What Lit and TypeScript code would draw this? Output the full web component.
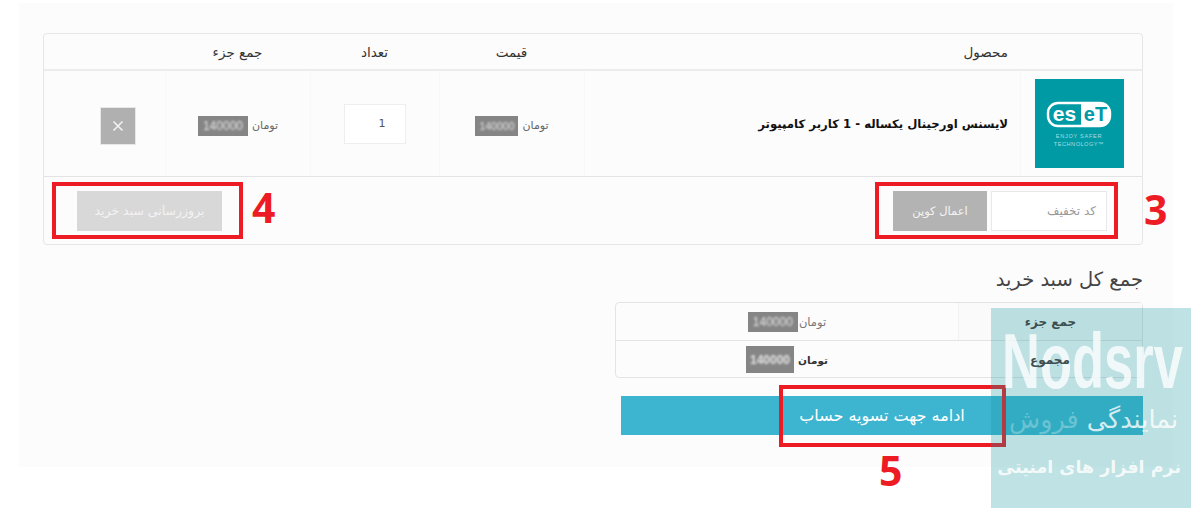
import { LitElement, html, css } from "lit";
import { customElement } from "lit/decorators.js";

const amount = (cls = "") => html`<span class="amt ${cls}"><span class="digits">140000</span></span>`;

@customElement("app-root")
export class AppRoot extends LitElement {
  static styles = css`
    :host { display: block; position: relative; width: 1201px; height: 518px; overflow: hidden; background: #fff;
      font-family: "DejaVu Sans", "Noto Sans", sans-serif; color: #555; }
    .panel { direction: rtl; box-sizing: border-box; width: 1154px; height: 464px; margin: 3px 0 0 19px;
      padding: 30px 30px 0 24px; background: #fcfcfc; display: flex; flex-direction: column; align-items: flex-start; }
    .cart { box-sizing: border-box; width: 1100px; height: 212px; border: 1px solid #e6e6e6; border-radius: 4px; }
    .grid { display: grid; grid-template-columns: 122px 436px 145px 129px 145px 121px; }
    .head { box-sizing: border-box; height: 37px; border-bottom: 2px solid #ececec; font-size: 13.5px; color: #333; align-items: center; text-align: center; }
    .head .name { text-align: right; padding-right: 12px; }
    .row { box-sizing: border-box; height: 106px; border-bottom: 1px solid #e4e4e4; }
    .cell { border-left: 1px solid #f8f8f8; display: flex; align-items: center; justify-content: center; gap: 4px; font-size: 11px; color: #666; }
    .cell.low { padding-top: 4px; }
    .cell.last { border-left: 0; padding-left: 26px; }
    .thumb { justify-content: flex-start; padding-right: 18px; }
    .title { justify-content: flex-start; padding-right: 12px; font-size: 11.7px; font-weight: bold; color: #111; }
    .logo { display: block; width: 89px; height: 89px; direction: ltr; }
    .amt { display: inline-flex; align-items: center; justify-content: center; direction: ltr; width: 50px; height: 20px; background: #858585; overflow: hidden; }
    .amt.narrow { width: 43px; }
    .amt.big { height: 27px; width: 48px; }
    .digits { font-family: "Liberation Sans", sans-serif; font-size: 12px; color: #e4e4e4; filter: blur(1px); }
    .narrow .digits { font-size: 10.5px; }
    .qty { box-sizing: border-box; width: 62px; height: 40px; border: 1px solid #eee; background: #fff; display: flex; align-items: center; justify-content: center; padding-left: 14px;
      font-size: 11px; color: #555; }
    .remove { box-sizing: border-box; width: 36px; height: 38px; background: #b0b0b0; border: 1px solid #e8e8e8; display: flex; align-items: center; justify-content: center; }
    .remove svg { display: block; width: 12px; height: 12px; }
    .foot { display: flex; justify-content: space-between; align-items: center; height: 67px; padding: 0 35px 0 33px; }
    .coupon { display: flex; gap: 4px; align-items: center; }
    .couponinput { box-sizing: border-box; width: 116px; height: 40px; background: #fff; border: 1px solid #e8e8e8; display: flex; align-items: center; padding-right: 10px; font-size: 12px; color: #999; }
    .btn { box-sizing: border-box; height: 40px; display: flex; align-items: center; justify-content: center; color: #f3f3f3; }
    .apply { width: 94px; background: #b3b3b3; font-size: 11.5px; }
    .update { width: 145px; background: #d8d8d8; font-size: 12.5px; }
    h2 { margin: 24px 0 0; height: 22px; line-height: 22px; font-size: 19.5px; font-weight: normal; color: #444; }
    .totals { box-sizing: border-box; margin-top: 11px; width: 528px; height: 76px; border: 1px solid #e4e4e4; border-radius: 4px; font-size: 12px; }
    .trow { display: grid; grid-template-columns: 184px 1fr; height: 37px; }
    .trow + .trow { border-top: 1px solid #e4e4e4; }
    .tlabel { display: flex; align-items: center; justify-content: center; font-weight: bold; color: #3d4f50; }
    .tlabel span { position: relative; z-index: 2; }
    .first .tlabel { background: #fafafa; border-left: 1px solid #f2f2f2; }
    .tval { display: flex; align-items: center; justify-content: center; gap: 1px; color: #777; font-size: 11.5px; }
    .tval.strong { gap: 4px; font-weight: bold; color: #333; font-size: 10.5px; }
    .checkout { margin-top: 18px; width: 522px; height: 39px; background: #3db5d1; color: #fff; display: flex; align-items: center; justify-content: center; font-size: 16px; }
    .mark { position: absolute; box-sizing: border-box; border: 4px solid #ed1c24; }
    .m3 { left: 875px; top: 182px; width: 243px; height: 57px; }
    .m4 { left: 52px; top: 182px; width: 191px; height: 57px; }
    .m5 { left: 779px; top: 385px; width: 227px; height: 62px; }
    .num { position: absolute; font-family: "Open Sans", sans-serif; font-weight: 700; font-size: 41px; line-height: 41px; color: #ed1c24; }
    .n3 { left: 1144px; top: 189px; }
    .n4 { left: 252px; top: 187px; }
    .n5 { left: 879px; top: 450px; }
    .wm { position: absolute; left: 991px; top: 308px; width: 200px; height: 200px; background: rgba(18, 148, 155, 0.27); overflow: hidden; direction: rtl; }
    .wm .brand { position: absolute; left: 11px; top: 14px; direction: ltr; font-family: "Liberation Sans", sans-serif; font-weight: 700; font-size: 78px; line-height: 78px; color: rgba(255,255,255,.78);
      transform-origin: left top; transform: scaleX(0.673); white-space: nowrap; }
    .wm .l1 { position: absolute; right: 13px; top: 94px; font-size: 25.5px; line-height: 34px; white-space: nowrap; color: rgba(255,255,255,.28); }
    .wm .l1 b { font-weight: normal; color: rgba(255,255,255,.8); }
    .wm .l2 { position: absolute; right: 10px; top: 147px; font-size: 17.5px; line-height: 24px; font-weight: bold; white-space: nowrap; color: rgba(255,255,255,.82); }
  `;

  render() {
    return html`
      <div class="panel">
        <div class="cart">
          <div class="grid head">
            <span></span>
            <span class="name">محصول</span>
            <span>قیمت</span>
            <span>تعداد</span>
            <span>جمع جزء</span>
            <span></span>
          </div>
          <div class="grid row">
            <div class="cell thumb">
              <svg class="logo" viewBox="0 0 89 89">
                <rect width="89" height="89" fill="#009aa5"/>
                <rect x="13" y="24" width="62" height="23" rx="10" fill="none" stroke="#fff" stroke-width="2.4"/>
                <path d="M46 24h20a9 9 0 0 1 9 9v5a9 9 0 0 1-9 9H46z" fill="#fff"/>
                <text x="29.5" y="41.5" text-anchor="middle" font-family="Liberation Sans, sans-serif" font-weight="700" font-size="21" fill="#fff">es</text>
                <text x="60.5" y="41.5" text-anchor="middle" font-family="Liberation Sans, sans-serif" font-weight="700" font-size="20" fill="#009aa5">eT</text>
                <text x="44" y="59" text-anchor="middle" font-family="Liberation Sans, sans-serif" font-size="5.6" letter-spacing=".7" fill="#a8dde1">ENJOY SAFER</text>
                <text x="44" y="67" text-anchor="middle" font-family="Liberation Sans, sans-serif" font-size="5.6" letter-spacing=".5" fill="#a8dde1">TECHNOLOGY™</text>
              </svg>
            </div>
            <div class="cell title">لایسنس اورجینال یکساله - 1 کاربر کامپیوتر</div>
            <div class="cell low"><span>تومان</span>${amount("narrow")}</div>
            <div class="cell"><div class="qty">1</div></div>
            <div class="cell low"><span>تومان</span>${amount()}</div>
            <div class="cell last low">
              <div class="remove">
                <svg viewBox="0 0 12 12"><path d="M1.5 1.5l9 9M10.5 1.5l-9 9" stroke="#f4f4f4" stroke-width="1.5" fill="none"/></svg>
              </div>
            </div>
          </div>
          <div class="foot">
            <div class="coupon">
              <div class="couponinput">کد تخفیف</div>
              <div class="btn apply">اعمال کوپن</div>
            </div>
            <div class="btn update">بروزرسانی سبد خرید</div>
          </div>
        </div>
        <h2>جمع کل سبد خرید</h2>
        <div class="totals">
          <div class="trow first">
            <div class="tlabel"><span>جمع جزء</span></div>
            <div class="tval"><span>تومان</span>${amount()}</div>
          </div>
          <div class="trow">
            <div class="tlabel"><span>مجموع</span></div>
            <div class="tval strong"><span>تومان</span>${amount("big")}</div>
          </div>
        </div>
        <div class="checkout">ادامه جهت تسویه حساب</div>
      </div>

      <div class="mark m3"></div>
      <div class="mark m4"></div>
      <div class="mark m5"></div>
      <div class="num n3">3</div>
      <div class="num n4">4</div>
      <div class="num n5">5</div>

      <div class="wm">
        <div class="brand">Nodsrv</div>
        <div class="l1"><b>نمایندگی</b> فروش</div>
        <div class="l2">نرم افزار های امنیتی</div>
      </div>
    `;
  }
}
